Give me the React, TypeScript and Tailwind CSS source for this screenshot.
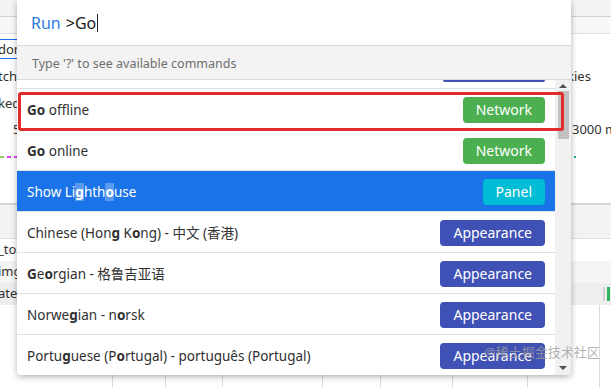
import React from 'react';

type Part = { t: string; b?: boolean };

interface Item {
  parts: Part[];
  badge: string;
  color: string;
  selected?: boolean;
}

const items: Item[] = [
  { parts: [{ t: 'Go', b: true }, { t: ' offline' }], badge: 'Network', color: 'bg-[#4caf50]' },
  { parts: [{ t: 'Go', b: true }, { t: ' online' }], badge: 'Network', color: 'bg-[#4caf50]' },
  {
    parts: [{ t: 'Show Li' }, { t: 'g', b: true }, { t: 'ht' }, { t: 'h' }, { t: 'o', b: true }, { t: 'use' }],
    badge: 'Panel',
    color: 'bg-[#00bcd4]',
    selected: true,
  },
  {
    parts: [{ t: 'Chinese (Hon' }, { t: 'g', b: true }, { t: ' K' }, { t: 'o', b: true }, { t: 'ng) - 中文 (香港)' }],
    badge: 'Appearance',
    color: 'bg-[#3f51b5]',
  },
  {
    parts: [{ t: 'G', b: true }, { t: 'e' }, { t: 'o', b: true }, { t: 'rgian - 格鲁吉亚语' }],
    badge: 'Appearance',
    color: 'bg-[#3f51b5]',
  },
  {
    parts: [{ t: 'Norwe' }, { t: 'g', b: true }, { t: 'ian - n' }, { t: 'o', b: true }, { t: 'rsk' }],
    badge: 'Appearance',
    color: 'bg-[#3f51b5]',
  },
  {
    parts: [{ t: 'Portu' }, { t: 'g', b: true }, { t: 'uese (P' }, { t: 'o', b: true }, { t: 'rtugal) - português (Portugal)' }],
    badge: 'Appearance',
    color: 'bg-[#3f51b5]',
  },
];

const Row = ({ item }: { item: Item }) => (
  <div
    className={`flex h-[41px] shrink-0 items-center justify-between border-b border-[#e0e0e0] pl-[10px] pr-[10px] ${
      item.selected ? 'bg-[#1a73e8] text-white' : 'bg-white text-[#303030]'
    }`}
  >
    <span className="whitespace-pre pt-[3px] text-[13.5px]">
      {item.parts.map((p, i) =>
        p.b ? (
          <span key={i} className={`font-bold ${item.selected ? 'bg-[#5a9bf0]' : ''}`}>
            {p.t}
          </span>
        ) : (
          <span key={i}>{p.t}</span>
        )
      )}
    </span>
    <span className={`mt-[1px] flex h-[26px] items-center rounded-[4px] px-[13px] text-[14px] text-white ${item.color}`}>
      {item.badge}
    </span>
  </div>
);

const BgRow = ({ h, left, right, cls = '' }: { h: string; left?: React.ReactNode; right?: React.ReactNode; cls?: string }) => (
  <div className={`flex items-center justify-between ${h} ${cls}`}>
    <div className="text-[13px] text-[#303030]">{left}</div>
    <div className="w-[39px] overflow-hidden whitespace-nowrap text-[13px] text-[#303030]">{right}</div>
  </div>
);

export default function App() {
  return (
    <div className="relative h-[387px] w-[611px] overflow-hidden bg-white" style={{ fontFamily: '"Noto Sans", "Noto Sans CJK SC", sans-serif' }}>
      {/* devtools page behind the palette */}
      <div className="flex h-full flex-col">
        <BgRow h="h-[17px]" cls="bg-[#f3f3f3] border-b border-[#d0d0d0]" />
        <BgRow h="h-[17px]" cls="bg-[#f8f8f8] border-b border-[#e0e0e0]" />
        <BgRow
          h="h-[30px]"
          left={<div className="-ml-[3px] border border-[#1a73e8] pr-1 leading-[18px]">dom</div>}
          right={<span />}
        />
        <BgRow h="h-[26px]" left={<span className="-ml-[2px]">tch,</span>} right={<span className="-ml-[5px]">kies</span>} />
        <BgRow h="h-[28px]" left={<span className="-ml-[2px]">ked</span>} />
        <BgRow h="h-[24px]" left={<span className="pl-[13px]">5</span>} right={<span>3000 ms</span>} />
        <BgRow
          h="h-[30px]"
          left={
            <div className="flex gap-[3px]">
              <span className="h-[2px] w-[4px] bg-[#9ccc65]" />
              <span className="h-[2px] w-[4px] bg-[#e040fb]" />
              <span className="h-[2px] w-[4px] bg-[#e040fb]" />
              <span className="h-[2px] w-[4px] bg-[#26a69a]" />
            </div>
          }
          right={<span className="ml-[2px] block h-[2px] w-[2px] bg-[#26a69a]" />}
        />
        <BgRow h="h-[33px]" cls="border-b-2 border-[#d6d6d6]" />
        <BgRow h="h-[34px]" cls="bg-[#f3f3f3] border-b border-[#e0e0e0]" />
        <BgRow h="h-[22px]" left={<span className="-ml-[2px]">_tok</span>} />
        <BgRow h="h-[22px]" left={<span className="-ml-[2px]">img</span>} cls="bg-[#f5f5f5]" />
        <BgRow
          h="h-[22px]"
          left={<span className="-ml-[2px]">ate</span>}
          right={
            <div className="flex justify-end gap-[2px] pr-[1px]">
              <span className="h-[14px] w-[2px] bg-[#d0d0d0]" />
              <span className="h-[14px] w-[3px] bg-[#2db55d]" />
            </div>
          }
          cls="bg-[#eeeeee]"
        />
        <div className="flex flex-1">
          {[113, 53, 57, 100, 58, 72, 75, 72].map((w, i) => (
            <div key={i} className="border-r border-[#dadada]" style={{ width: w }} />
          ))}
        </div>
      </div>

      {/* command palette */}
      <div className="absolute left-[17px] top-0 flex h-[375px] w-[554px] flex-col overflow-hidden rounded-b-[4px] bg-white shadow-[0_2px_6px_rgba(0,0,0,0.3)]">
        <div className="flex h-[46px] shrink-0 items-center border-b border-[#dadada] pl-[14px] text-[16px]">
          <span className="text-[#2f7de1]">Run</span>
          <span className="ml-[5px] text-[#202020]">&gt;Go</span>
          <span className="ml-[1px] h-[18px] w-[1px] bg-[#202020]" />
        </div>
        <div className="flex h-[34px] shrink-0 items-center border-b border-[#dadada] bg-[#f3f3f3] pl-[15px] pt-[3px] text-[12.5px] text-[#6e6e6e]">
          Type '?' to see available commands
        </div>
        <div className="flex min-h-0 flex-1">
          <div className="flex min-w-0 flex-1 flex-col overflow-hidden">
            {/* previous item scrolled almost out of view */}
            <div className="flex h-[9px] shrink-0 justify-end border-b border-[#e0e0e0] pr-[10px]">
              <span className="h-[2px] w-[102px] rounded-b-[4px] bg-[#3f51b5]" />
            </div>
            {items.map((it, i) => (
              <Row key={i} item={it} />
            ))}
          </div>
          <div className="flex w-[16px] shrink-0 flex-col items-center bg-[#f1f1f1]">
            <span className="mt-[4px] h-0 w-0 border-x-[4px] border-b-[4px] border-x-transparent border-b-[#505050]" />
            <span className="mt-[3px] h-[48px] w-[11px] bg-[#c1c1c1]" />
            <span className="flex-1" />
            <span className="mb-[5px] h-0 w-0 border-x-[4px] border-t-[4px] border-x-transparent border-t-[#505050]" />
          </div>
        </div>
      </div>

      {/* annotation around the first match */}
      <div className="absolute left-[18px] top-[92px] h-[39px] w-[546px] rounded-[3px] border-[3px] border-[#e32b2b]" />

      {/* watermark */}
      <div className="absolute left-[484px] top-[343px] text-[13px] text-[#a0a0a0]/80">@稀土掘金技术社区</div>
    </div>
  );
}
